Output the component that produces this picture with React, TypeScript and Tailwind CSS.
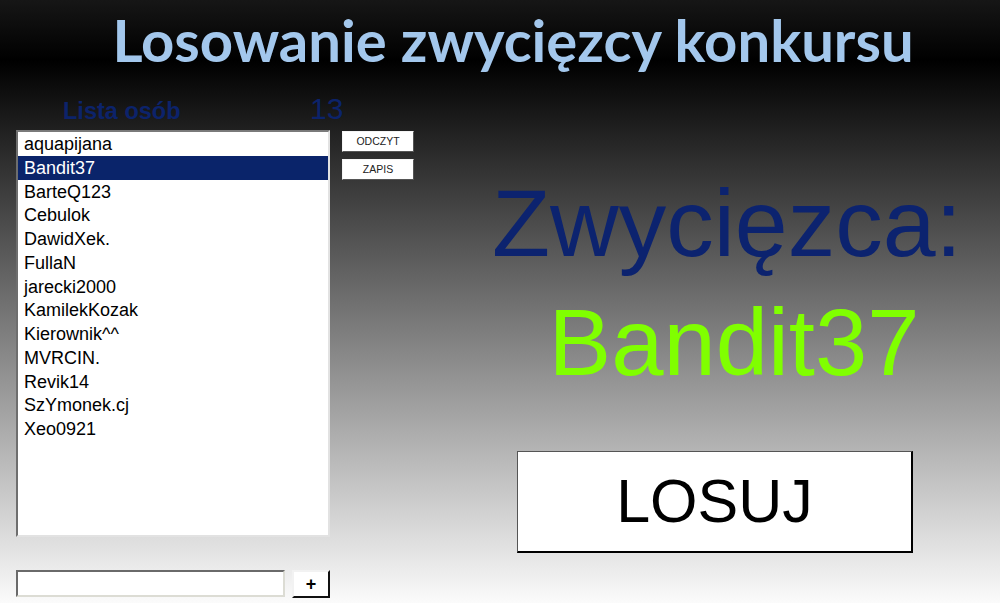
import React from "react";

const names = [
  "aquapijana",
  "Bandit37",
  "BarteQ123",
  "Cebulok",
  "DawidXek.",
  "FullaN",
  "jarecki2000",
  "KamilekKozak",
  "Kierownik^^",
  "MVRCIN.",
  "Revik14",
  "SzYmonek.cj",
  "Xeo0921",
];

export default function App() {
  return (
    <div className="w-[1000px] h-[603px] overflow-hidden bg-[linear-gradient(to_bottom,#161616_0%,#000_10%,#fbfbfb_100%)] font-['Liberation_Sans',Arial,sans-serif]">
      <div className="h-[94px] pt-[8px] pl-[26px] text-center font-['Lato',sans-serif] font-bold text-[58px] leading-[64px] text-[#a3c7ec] whitespace-nowrap">
        Losowanie zwycięzcy konkursu
      </div>
      <div className="flex">
        <div className="w-[430px] pl-[16px]">
          <div className="flex items-baseline h-[36px]">
            <span className="ml-[47px] w-[247px] font-bold text-[23.5px] leading-[23px] text-[#0c236b]">
              Lista osób
            </span>
            <span className="text-[30px] leading-[30px] text-[#0c236b]">13</span>
          </div>
          <div className="flex">
            <div className="w-[314px] h-[407px] bg-white border-2 border-t-[#7a7a7a] border-l-[#6e6e6e] border-b-[#e2e2e2] border-r-[#e2e2e2]">
              {names.map((n, i) => (
                <div
                  key={n}
                  className={
                    i === 1
                      ? "h-[23.75px] pt-[2px] pl-[6px] text-[18px] leading-[21px] bg-[#0a246a] text-white"
                      : "h-[23.75px] pt-[2px] pl-[6px] text-[18px] leading-[21px] text-black"
                  }
                >
                  {n}
                </div>
              ))}
            </div>
            <div className="ml-[12px] mt-[1px] flex flex-col gap-[7px]">
              <div className="w-[72px] h-[21px] bg-white border border-t-[#f4f4f4] border-l-[#f4f4f4] border-b-[#555] border-r-[#555] flex items-center justify-center text-[10.5px] text-[#222]">
                ODCZYT
              </div>
              <div className="w-[72px] h-[21px] bg-white border border-t-[#f4f4f4] border-l-[#f4f4f4] border-b-[#555] border-r-[#555] flex items-center justify-center text-[10.5px] text-[#222]">
                ZAPIS
              </div>
            </div>
          </div>
          <div className="flex mt-[33px]">
            <div className="w-[269px] h-[27px] bg-white border-2 border-t-[#6a6a6a] border-l-[#6a6a6a] border-b-[#dcdcd4] border-r-[#dcdcd4]" />
            <div className="ml-[7px] w-[38px] h-[28px] bg-white border-2 border-t-[#f2f2f2] border-l-[#f2f2f2] border-b-[#111] border-r-[#111] flex items-center justify-center font-bold text-[18px] text-black">
              +
            </div>
          </div>
        </div>
        <div className="flex-1 flex flex-col">
          <div className="mt-[82px] pl-[24px] text-center text-[95px] leading-[95px] text-[#0c236f] whitespace-nowrap">
            Zwycięzca:
          </div>
          <div className="mt-[25px] pl-[38px] text-center text-[94px] leading-[94px] text-[#80ff00] whitespace-nowrap">
            Bandit37
          </div>
          <div className="mt-[61px] ml-[87px] w-[396px] h-[102px] bg-white border-t border-l border-t-[#555] border-l-[#555] border-b-2 border-r-2 border-b-black border-r-black flex items-center justify-center text-[61px] text-black">
            LOSUJ
          </div>
        </div>
      </div>
    </div>
  );
}
